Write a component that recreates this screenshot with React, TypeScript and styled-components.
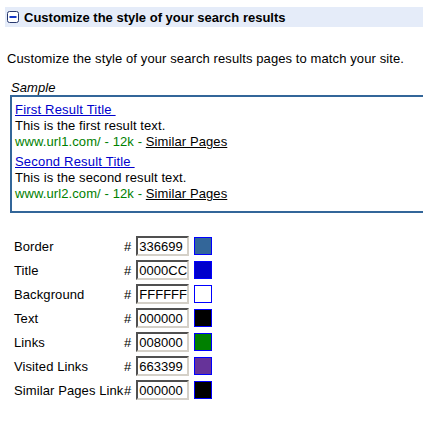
import React from "react";
import styled, { createGlobalStyle } from "styled-components";

const Global = createGlobalStyle`
  html, body { margin: 0; padding: 0; background: #fff; overflow: hidden; }
  body { font-family: "Liberation Sans", Arial, sans-serif; font-size: 13px; color: #000; letter-spacing: 0.1px; }
`;

const Page = styled.div`
  padding: 7px 0 0 5px;
  overflow: hidden;
`;

const Header = styled.div`
  display: flex;
  align-items: center;
  gap: 5px;
  height: 20px;
  padding-left: 2px;
  background: #e5ecf9;
`;

const HeaderTitle = styled.span`
  font-weight: bold;
  font-size: 13px;
  letter-spacing: 0;
`;

const Description = styled.p`
  margin: 24px 0 0 2px;
  line-height: 16px;
`;

const SampleLabel = styled.div`
  margin: 13px 0 0 6px;
  font-style: italic;
  line-height: 15px;
`;

const SampleBox = styled.div`
  margin: 0 -40px 0 5px;
  border: 2px solid #336699;
  padding: 5px 3px 9px;
  line-height: 16px;
`;

const Result = styled.div`
  & + & { margin-top: 4px; }
`;

const TitleLink = styled.a`
  display: block;
  color: #0000cc;
  text-decoration: underline;
  white-space: pre;
  letter-spacing: 0.2px;
`;

const ResultText = styled.div`
  color: #000;
`;

const UrlLine = styled.div`
  color: #008000;
`;

const SimilarLink = styled.a`
  color: #000;
  text-decoration: underline;
`;

const ColorGrid = styled.div`
  display: grid;
  grid-template-columns: minmax(110px, auto) auto auto auto;
  justify-content: start;
  align-items: center;
  row-gap: 4px;
  margin: 23px 0 0 9px;
`;

const Label = styled.span`
  white-space: nowrap;
`;

const Hash = styled.span`
  margin-right: 5px;
`;

const HexInput = styled.input`
  box-sizing: border-box;
  width: 53px;
  height: 20px;
  margin: 0;
  padding: 0 0 0 1px;
  border: 2px solid;
  border-color: #505050 #d4d0c8 #d4d0c8 #505050;
  font-family: "Liberation Sans", Arial, sans-serif;
  font-size: 13px;
  letter-spacing: 0;
  color: #000;
  background: #fff;
  outline: none;
`;

const Swatch = styled.span<{ $color: string }>`
  display: block;
  box-sizing: border-box;
  width: 18px;
  height: 18px;
  margin-left: 5px;
  border: 1px solid #0000ff;
  background: ${(p) => p.$color};
`;

const MinusIcon = () => (
  <svg width="12" height="12" viewBox="0 0 12 12">
    <rect x="0.5" y="0.5" width="11" height="11" rx="2" fill="#fff" stroke="#28386e" />
    <rect x="2.5" y="5" width="7" height="2" fill="#1538c8" />
  </svg>
);

const rows: [string, string][] = [
  ["Border", "336699"],
  ["Title", "0000CC"],
  ["Background", "FFFFFF"],
  ["Text", "000000"],
  ["Links", "008000"],
  ["Visited Links", "663399"],
  ["Similar Pages Link", "000000"],
];

export default function App() {
  return (
    <>
      <Global />
      <Page>
        <Header>
          <MinusIcon />
          <HeaderTitle>Customize the style of your search results</HeaderTitle>
        </Header>
        <Description>Customize the style of your search results pages to match your site.</Description>
        <SampleLabel>Sample</SampleLabel>
        <SampleBox>
          <Result>
            <TitleLink href="#">First Result Title </TitleLink>
            <ResultText>This is the first result text.</ResultText>
            <UrlLine>
              www.url1.com/ - 12k - <SimilarLink href="#">Similar Pages</SimilarLink>
            </UrlLine>
          </Result>
          <Result>
            <TitleLink href="#">Second Result Title </TitleLink>
            <ResultText>This is the second result text.</ResultText>
            <UrlLine>
              www.url2.com/ - 12k - <SimilarLink href="#">Similar Pages</SimilarLink>
            </UrlLine>
          </Result>
        </SampleBox>
        <ColorGrid>
          {rows.map(([label, value]) => (
            <React.Fragment key={label}>
              <Label>{label}</Label>
              <Hash>#</Hash>
              <HexInput defaultValue={value} />
              <Swatch $color={"#" + value} />
            </React.Fragment>
          ))}
        </ColorGrid>
      </Page>
    </>
  );
}
